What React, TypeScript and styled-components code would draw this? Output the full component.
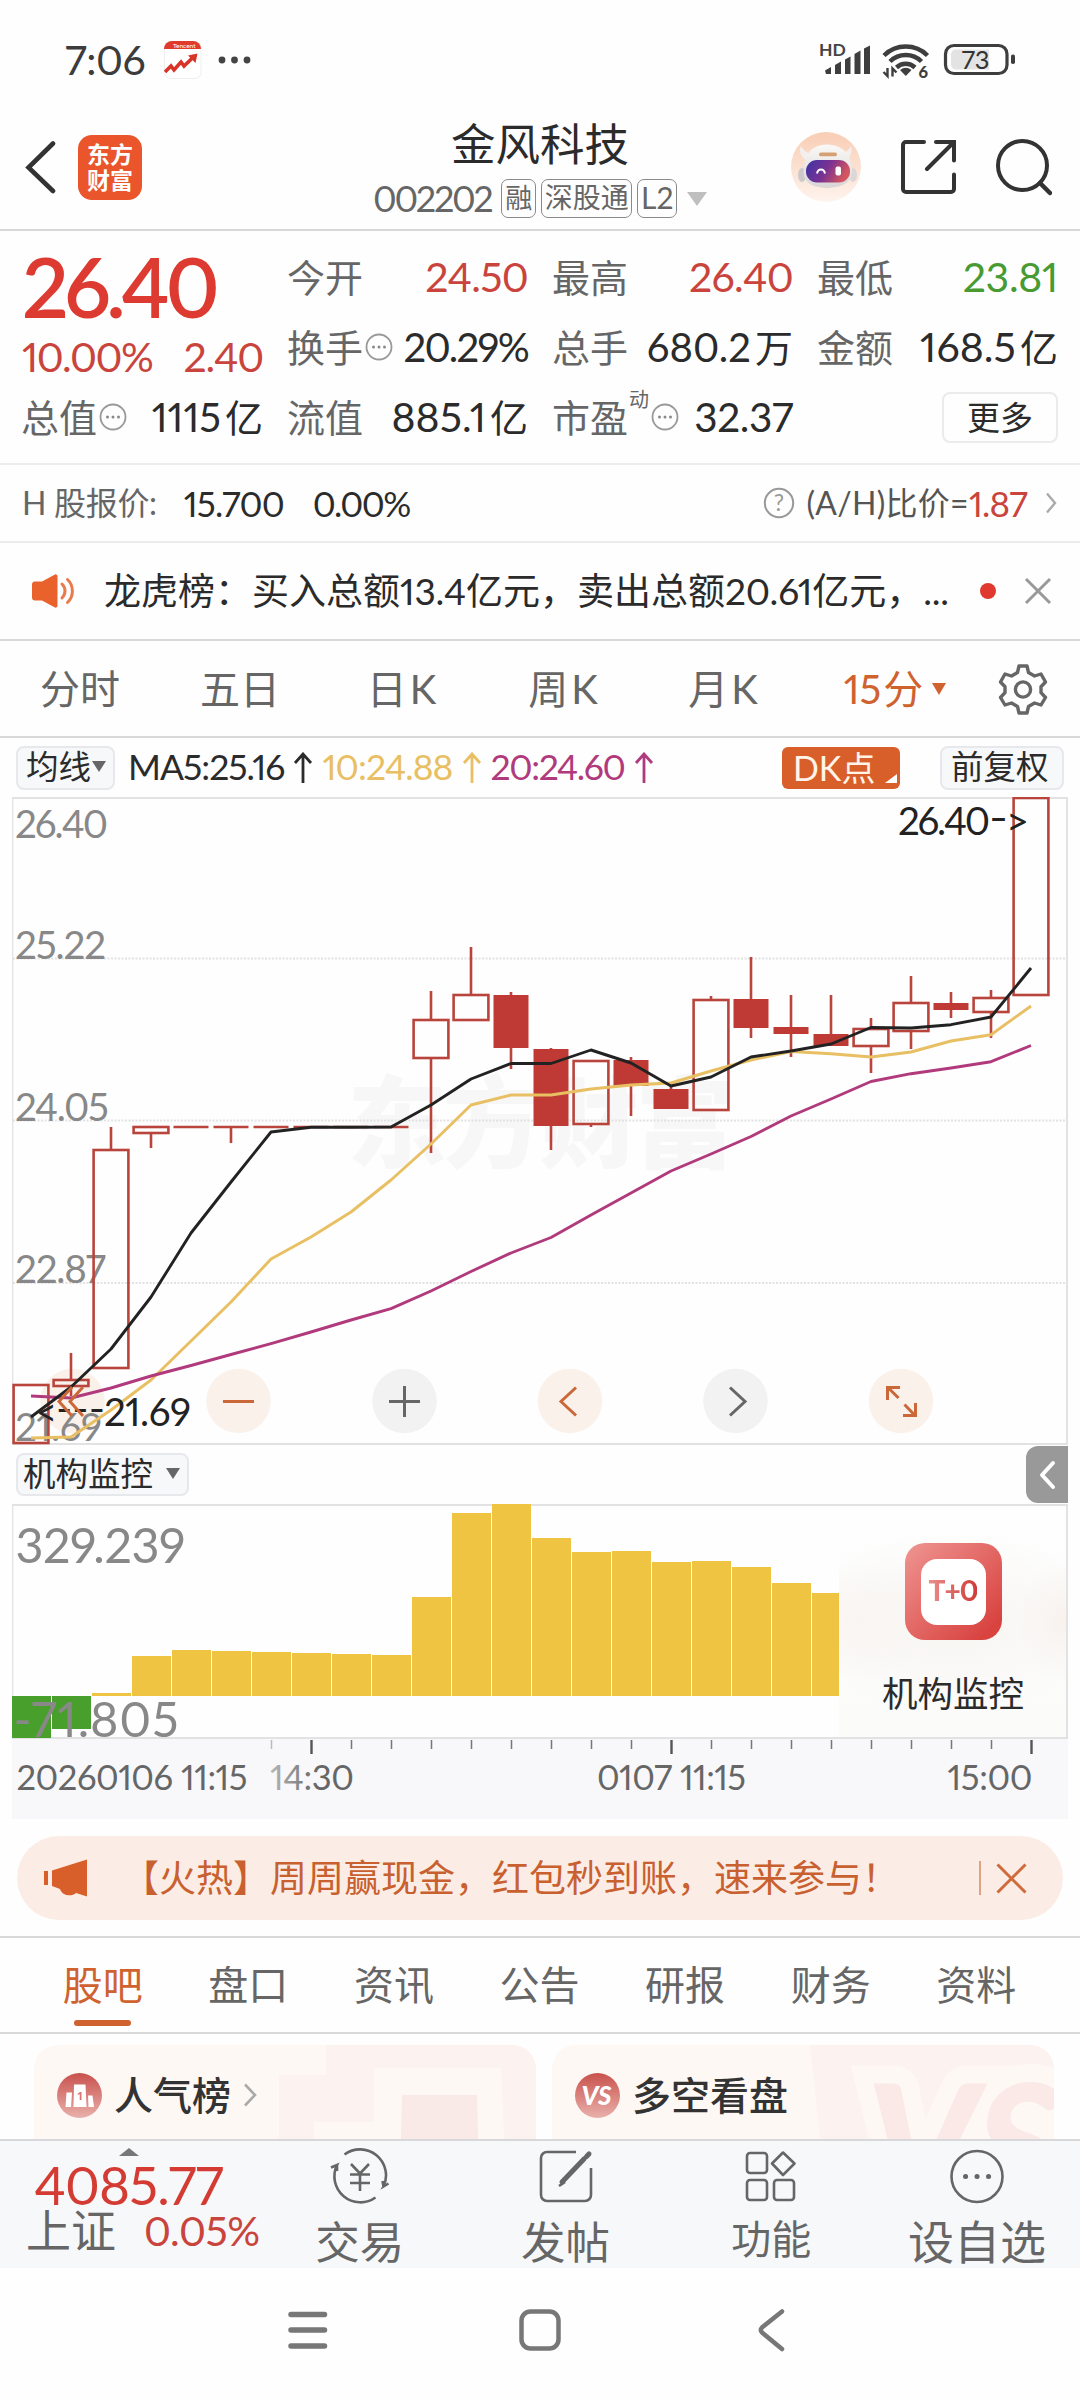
import React from 'react';
import styled, { createGlobalStyle } from 'styled-components';

const FONT = 'Lato, "Noto Sans CJK SC", sans-serif';
const RED = '#c9443c';
const ORANGE = '#cf622f';
const INK = '#2b2b2b';
const GREY = '#666';

const Global = createGlobalStyle`
  * { box-sizing: border-box; }
  body {
    margin: 0;
    background: #fefefe;
    font-family: ${FONT};
    font-variant-numeric: proportional-nums;
    color: ${INK};
  }
  svg { display: block; flex: none; }
`;

const Page = styled.div`
  width: 1080px;
  height: 2400px;
  overflow: hidden;
  display: flex;
  flex-direction: column;
  background: #fefefe;
`;

const Txt = styled.span<{ $s: number; $c?: string; $ls?: number; $w?: number }>`
  font-size: ${(p) => p.$s}px;
  line-height: 1.2;
  color: ${(p) => p.$c ?? INK};
  letter-spacing: ${(p) => p.$ls ?? 0}px;
  font-weight: ${(p) => p.$w ?? 400};
  white-space: nowrap;
  flex: none;
`;
const Unit = styled.span`
  font-size: 38px;
  letter-spacing: 0;
  margin-left: 4px;
`;

/* ---------- status bar ---------- */
const StatusBar = styled.div`
  height: 120px;
  padding: 0 64px 0 65px;
  display: flex;
  align-items: center;
  flex: none;
`;
const StatusIcons = styled.div`
  margin-left: auto;
  display: flex;
`;
const AppBadge = styled.div`
  margin: 0 16px 0 19px;
`;

/* ---------- title bar ---------- */
const TitleBar = styled.header`
  height: 111px;
  flex: none;
  display: flex;
  align-items: center;
  justify-content: space-between;
  border-bottom: 2px solid #d8d8d8;
  padding: 0 24px;
`;
const Side = styled.div<{ $right?: boolean }>`
  width: 268px;
  display: flex;
  align-items: center;
  justify-content: ${(p) => (p.$right ? 'flex-end' : 'flex-start')};
  gap: ${(p) => (p.$right ? 40 : 22)}px;
  padding-bottom: 15px;
  padding-right: ${(p) => (p.$right ? 4 : 0)}px;
`;
const Logo = styled.div`
  width: 64px;
  height: 65px;
  border-radius: 14px;
  background: #ea552b;
  color: #fff;
  font-size: 23px;
  line-height: 26px;
  font-weight: 700;
  text-align: center;
  padding-top: 6px;
`;
const TitleCenter = styled.div`
  display: flex;
  flex-direction: column;
  align-items: center;
  gap: 8px;
  padding-bottom: 13px;
`;
const CodeLine = styled.div`
  display: flex;
  align-items: center;
  height: 40px;
  gap: 5px;
`;
const Tag = styled.span<{ $s: number; $w: number }>`
  width: ${(p) => p.$w}px;
  height: 39px;
  border: 1.5px solid #8a8a8a;
  border-radius: 7px;
  font-size: ${(p) => p.$s}px;
  line-height: 35px;
  color: ${GREY};
  text-align: center;
  white-space: nowrap;
`;

/* ---------- quote ---------- */
const Quote = styled.section`
  height: 234px;
  flex: none;
  border-bottom: 2px solid #ececec;
  padding: 11px 22px 0 22px;
  display: grid;
  grid-template-columns: 241px 240px 240px 240px;
  column-gap: 25px;
`;
const Col = styled.div`
  display: flex;
  flex-direction: column;
`;
const Cell = styled.div<{ $h?: number }>`
  height: ${(p) => p.$h ?? 70}px;
  display: flex;
  align-items: center;
  justify-content: space-between;
`;
const Label = styled.span`
  display: flex;
  align-items: center;
  margin-left: -1px;
  font-size: 38px;
  line-height: 46px;
  color: ${GREY};
  white-space: nowrap;
  svg { margin-left: 2px; }
`;
const Sup = styled.span`
  font-size: 20px;
  line-height: 20px;
  align-self: flex-start;
  margin: -5px 0 0 1px;
`;
const MoreBtn = styled.div`
  margin-left: auto;
  width: 116px;
  height: 51px;
  border: 2px solid #e9ebed;
  border-radius: 8px;
  font-size: 33px;
  line-height: 46px;
  text-align: center;
`;

/* ---------- rows ---------- */
const Row = styled.div<{ $h: number; $line?: string; $pad?: string }>`
  height: ${(p) => p.$h}px;
  flex: none;
  display: flex;
  align-items: center;
  padding: ${(p) => p.$pad ?? '0 23px'};
  border-bottom: ${(p) => (p.$line ? `2px solid ${p.$line}` : 'none')};
`;
const Gap = styled.span<{ $w: number }>`
  width: ${(p) => p.$w}px;
  flex: none;
`;
const Grow = styled.span`
  flex: 1;
`;
const Dot = styled.span`
  width: 16px;
  height: 16px;
  border-radius: 50%;
  background: #e0392f;
`;
const News = styled.div`
  font-size: 37px;
  line-height: 44px;
  width: 850px;
  white-space: nowrap;
  b { font-weight: 400; letter-spacing: -0.2px; }
`;
const Period = styled.div<{ $w: number; $on?: boolean }>`
  width: ${(p) => p.$w}px;
  display: flex;
  align-items: center;
  justify-content: center;
  font-size: 40px;
  line-height: 48px;
  color: ${(p) => (p.$on ? ORANGE : GREY)};
`;
const Tri = styled.i<{ $w: number; $h: number; $c: string; $up?: boolean }>`
  width: 0;
  height: 0;
  flex: none;
  border-left: ${(p) => p.$w / 2}px solid transparent;
  border-right: ${(p) => p.$w / 2}px solid transparent;
  border-top: ${(p) => (p.$up ? 0 : p.$h)}px solid ${(p) => p.$c};
  border-bottom: ${(p) => (p.$up ? p.$h : 0)}px solid ${(p) => p.$c};
`;
const Chip = styled.div<{ $w: number; $h: number }>`
  width: ${(p) => p.$w}px;
  height: ${(p) => p.$h}px;
  border: 2px solid #e6e8eb;
  border-radius: 8px;
  background: #f7f8fa;
  display: flex;
  align-items: center;
  justify-content: space-between;
  padding: 0 7px 2px 5px;
  font-size: 32.5px;
  line-height: 40px;
  white-space: nowrap;
`;
const DKChip = styled.div`
  width: 118px;
  height: 42px;
  border-radius: 6px;
  background: #d95f2a;
  color: #fff3ea;
  font-size: 34px;
  line-height: 40px;
  padding-left: 11px;
  display: flex;
  align-items: center;
  gap: 10px;
  white-space: nowrap;
`;
const Corner = styled.i`
  align-self: flex-end;
  margin-bottom: 6px;
  border-left: 12px solid transparent;
  border-bottom: 9px solid #fff;
`;
const Collapse = styled.div`
  width: 42px;
  height: 57px;
  border-radius: 12px 0 0 12px;
  background: #999;
  display: flex;
  align-items: center;
  justify-content: center;
`;
const ChartBox = styled.div`
  flex: none;
  padding-left: 12px;
`;

/* ---------- sub chart overlay ---------- */
const SubWrap = styled.div`
  position: relative;
  flex: none;
  height: 315px;
  padding-left: 12px;
`;
const MonitorCard = styled.div`
  position: absolute;
  left: 839px;
  top: 2px;
  width: 227px;
  height: 231px;
  display: flex;
  flex-direction: column;
  align-items: center;
  gap: 33px;
  padding: 37px 0 0 1px;
  background:
    radial-gradient(ellipse 80px 60px at 20px 115px, #f9f5f2 0%, rgba(249, 245, 242, 0) 100%),
    radial-gradient(ellipse 50px 60px at 226px 115px, #f8f2ee 0%, rgba(248, 242, 238, 0) 100%),
    radial-gradient(ellipse 160px 90px at 113px 115px, #f7f5f1 0%, rgba(247, 245, 241, 0) 100%),
    linear-gradient(#fefefe, #fbfbfa);
`;
const TZero = styled.div`
  width: 97px;
  height: 97px;
  border-radius: 20px;
  background: linear-gradient(135deg, #ef9592 0%, #d8423f 90%);
  display: flex;
  align-items: center;
  justify-content: center;
`;
const TZeroInner = styled.div`
  width: 65px;
  height: 66px;
  border-radius: 16px;
  background: #fff;
  text-align: center;
  font-size: 28px;
  font-weight: 900;
  line-height: 62px;
  letter-spacing: -1px;
  span {
    background: linear-gradient(90deg, #e98f8b, #cf3b38);
    -webkit-background-clip: text;
    background-clip: text;
    color: transparent;
  }
`;

/* ---------- promo banner ---------- */
const Banner = styled.div`
  height: 84px;
  flex: none;
  margin: 17px 17px 16px 17px;
  border-radius: 42px;
  background: #fbede5;
  display: flex;
  align-items: center;
  padding: 0 36px 0 27px;
`;
const VLine = styled.span`
  width: 2px;
  height: 34px;
  background: #dca384;
  margin-right: 15px;
`;

/* ---------- info tabs ---------- */
const Tabs = styled.nav`
  height: 98px;
  flex: none;
  border-top: 2px solid #d8d8d8;
  border-bottom: 2px solid #d8d8d8;
  display: flex;
  padding: 0 31px 0 30px;
`;
const Tab = styled.div<{ $on?: boolean }>`
  flex: 1;
  display: flex;
  flex-direction: column;
  align-items: center;
  padding-top: 23px;
  font-size: 40px;
  line-height: 48px;
  color: ${(p) => (p.$on ? ORANGE : GREY)};
  &::after {
    content: '';
    width: 57px;
    height: 6px;
    margin-top: 11px;
    border-radius: 3px;
    background: ${(p) => (p.$on ? ORANGE : 'transparent')};
  }
`;
const Cards = styled.div`
  height: 105px;
  flex: none;
  display: flex;
  gap: 16px;
  padding: 11px 26px 0 34px;
  overflow: hidden;
`;
const Card = styled.div`
  position: relative;
  width: 502px;
  height: 130px;
  flex: none;
  border-radius: 24px;
  overflow: hidden;
  background: #fef8f5;
  display: flex;
  align-items: flex-start;
  padding: 27px 0 0 23px;
  font-size: 39px;
  line-height: 46px;
  font-weight: 500;
  color: #333;
`;
const Decor = styled.svg`
  position: absolute;
  right: 0;
  top: 0;
`;
const CardRow = styled.div`
  position: relative;
  display: flex;
  align-items: center;
  height: 46px;
`;

/* ---------- bottom bar ---------- */
const Bottom = styled.footer`
  height: 129px;
  flex: none;
  border-top: 2px solid #d8d8da;
  background: #f7f8fa;
  display: flex;
`;
const IndexBox = styled.div`
  width: 257px;
  display: flex;
  flex-direction: column;
  align-items: center;
  padding-top: 7px;
`;
const IndexValue = styled.div`
  font-size: 53px;
  line-height: 58px;
  letter-spacing: -0.9px;
  color: #d43c33;
`;
const IndexLine = styled.div`
  width: 257px;
  height: 34px;
  display: flex;
  align-items: center;
  padding-left: 26px;
  gap: 28px;
`;
const Action = styled.div<{ $s: number; $lh: number }>`
  width: 205.7px;
  display: flex;
  flex-direction: column;
  align-items: center;
  padding-top: 7px;
  font-size: ${(p) => p.$s}px;
  line-height: ${(p) => p.$lh}px;
  color: ${GREY};
  svg { margin-bottom: 11px; }
`;
const NavBar = styled.div`
  flex: 1;
  display: flex;
  padding: 40px 0 0 287px;
`;

/* ---------- chart data ---------- */
const STEP = 40;
const cx = (i: number) => 31 + i * STEP;

type Candle = { kind: 'up' | 'down' | 'flat'; t: number; b: number; hi?: number; lo?: number };
const flat = (lo?: number): Candle => ({ kind: 'flat', t: 1127, b: 1127, lo });
const candles: Candle[] = [
  { kind: 'up', t: 1385, b: 1443 },
  { kind: 'up', t: 1380, b: 1386, hi: 1353, lo: 1396 },
  { kind: 'up', t: 1150, b: 1368, hi: 1127 },
  { kind: 'up', t: 1127, b: 1133, lo: 1148 },
  flat(), flat(1143), flat(), flat(), flat(), flat(),
  { kind: 'up', t: 1020, b: 1058, hi: 991, lo: 1153 },
  { kind: 'up', t: 995, b: 1020, hi: 947 },
  { kind: 'down', t: 995, b: 1048, hi: 992, lo: 1069 },
  { kind: 'down', t: 1049, b: 1126, hi: 1048, lo: 1150 },
  { kind: 'up', t: 1061, b: 1124, lo: 1127 },
  { kind: 'down', t: 1060, b: 1086, hi: 1057, lo: 1116 },
  { kind: 'down', t: 1089, b: 1109, hi: 1087 },
  { kind: 'up', t: 1000, b: 1110, hi: 996 },
  { kind: 'down', t: 999, b: 1028, hi: 957, lo: 1038 },
  { kind: 'down', t: 1027, b: 1034, hi: 995, lo: 1057 },
  { kind: 'down', t: 1034, b: 1046, hi: 995 },
  { kind: 'up', t: 1029, b: 1046, hi: 1018, lo: 1073 },
  { kind: 'up', t: 1003, b: 1031, hi: 976, lo: 1049 },
  { kind: 'down', t: 1003, b: 1010, hi: 992, lo: 1018 },
  { kind: 'up', t: 998, b: 1012, hi: 990, lo: 1038 },
  { kind: 'up', t: 798, b: 995 },
];
const ma5 = [1417, 1387, 1349, 1297, 1233, 1182, 1132, 1127.3, 1127.3, 1127, 1105, 1079, 1063.5, 1063.5, 1050, 1063, 1086, 1077, 1057, 1051, 1044, 1027.5, 1028, 1024.7, 1017, 968];
const ma10 = [1438, 1437, 1410, 1380, 1341, 1302, 1259, 1237, 1212, 1180, 1144, 1105, 1095, 1095, 1089, 1085, 1083, 1071, 1060, 1051.5, 1053.7, 1057, 1052, 1041, 1034.7, 1006];
const ma20 = [1396, 1398, 1388, 1376, 1365.5, 1354.5, 1343.7, 1332, 1320, 1308.7, 1291, 1271.5, 1253, 1237.5, 1215, 1193, 1171, 1154, 1136.5, 1116, 1099, 1081.5, 1073.7, 1068, 1061.7, 1045.5];
const line = (v: number[]) => v.map((y, i) => `${cx(i)},${y}`).join(' ');

const bars = [1738, 1729, 1693, 1656, 1650, 1651, 1652, 1653, 1654, 1655, 1597, 1513, 1504, 1538, 1552, 1551, 1562, 1561, 1567, 1583, 1593];
const ZERO = 1696;

const axisLabels: [string, number, number][] = [
  ['26.40', 837.5, 93],
  ['25.22', 959, 91],
  ['24.05', 1121, 94],
  ['22.87', 1283, 91],
  ['21.69', 1441, 87],
];

const CandleShape = ({ c, x }: { c: Candle; x: number }) => (
  <g stroke="#b8443c" strokeWidth={2.6} fill="none">
    {c.hi !== undefined && <path d={`M${x} ${c.hi}V${c.t}`} />}
    {c.lo !== undefined && <path d={`M${x} ${c.b}V${c.lo}`} />}
    {c.kind === 'up' && <rect x={x - 17.4} y={c.t} width={34.8} height={c.b - c.t} />}
    {c.kind === 'down' && <rect x={x - 17.5} y={c.t} width={35} height={c.b - c.t} fill="#bf3a35" stroke="none" />}
    {c.kind === 'flat' && <path d={`M${x - 17.5} ${c.t}h35`} />}
  </g>
);

const MainChart = () => (
  <svg width="1056" height="648" viewBox="12 797 1056 648" fontFamily={FONT}>
    <text x="347" y="1160" fontSize="100" fontWeight="900" fill="#f7f7f7" textLength="388">东方财富</text>
    {[958.5, 1120.5, 1283].map((y) => (
      <path key={y} d={`M13 ${y}H1067`} stroke="#e2e2e2" strokeWidth="2" strokeDasharray="2 1.5" />
    ))}
    <path d="M12 798H1067V1444H12" fill="none" stroke="#e2e2e2" strokeWidth="2" />
    <path d="M12.7 798V1444" stroke="#e2e2e2" strokeWidth="1.2" />
    {[[72.5, 1], [238.5, 1], [404.5, 0], [570, 1], [735.5, 0], [901, 1]].map(([x, o]) => (
      <circle key={x} cx={x} cy="1401" r="32.3" fill={o ? '#fbf1eb' : '#f2f2f2'} />
    ))}
    {axisLabels.map(([t, y, w]) => (
      <text key={t} x="15" y={y} fontSize="38.5" fill="#888" textLength={w}>{t}</text>
    ))}
    {candles.map((c, i) => <CandleShape key={i} c={c} x={cx(i)} />)}
    <g fill="none" strokeWidth="2.9" strokeLinejoin="round">
      <polyline points={line(ma10)} stroke="#e8bf62" />
      <polyline points={line(ma20)} stroke="#b03a7c" />
      <polyline points={line(ma5)} stroke="#222" />
    </g>
    <g fontSize="38.5" fill="#222">
      <text x="898" y="835" textLength="92">26.40</text>
      <text x="989" y="831" textLength="19" lengthAdjust="spacingAndGlyphs">-</text>
      <text x="1006" y="835" textLength="23" lengthAdjust="spacingAndGlyphs">&gt;</text>
      <text x="36" y="1426" textLength="21" lengthAdjust="spacingAndGlyphs">&lt;</text>
      <text x="56" y="1422" textLength="49" lengthAdjust="spacingAndGlyphs">---</text>
      <text x="104" y="1426" textLength="87">21.69</text>
    </g>
    <g fill="none" stroke="#ca6839" strokeWidth="3">
      <path d="M72 1387L59 1401.5L72 1416M83 1387L70 1401.5L83 1416" />
      <path d="M223 1401.5H254" />
      <path d="M576 1387.5L561 1401.5L576 1415.5" />
      <path d="M898.5 1398L888 1387.5M887.5 1400V1387.5H900M904.5 1404.500L915 1415.500M903 1415.500H915.500V1403" />
    </g>
    <g fill="none" stroke="#666" strokeWidth="3">
      <path d="M389 1401.500H420M404.500 1386V1417" />
      <path d="M730 1387.500L745 1401.500L730 1415.500" />
    </g>
  </svg>
);

const SubChart = () => (
  <svg width="1056" height="315" viewBox="12 1504 1056 315" fontFamily={FONT}>
    <defs>
      <linearGradient id="fade" gradientUnits="userSpaceOnUse" x1="268" y1="0" x2="318" y2="0">
        <stop offset="0" stopColor="#bbb" />
        <stop offset="1" stopColor="#666" />
      </linearGradient>
    </defs>
    <rect x="12" y="1739" width="1056" height="80" fill="#f8f8fb" />
    <path d="M12 1505H1067V1738H12" fill="none" stroke="#e2e2e2" strokeWidth="2" />
    <path d="M12.700 1505V1738" stroke="#e2e2e2" strokeWidth="1.2" />
    {bars.map((y, i) => (
      <rect
        key={i}
        x={12 + i * STEP}
        y={Math.min(y, ZERO)}
        width={i === 20 ? 27 : 39}
        height={Math.abs(ZERO - y)}
        fill={y > ZERO ? '#489f2b' : '#efc443'}
      />
    ))}
    <text x="15.500" y="1562.500" fontSize="48.500" fill="#888" textLength="170">329.239</text>
    <text x="13.500" y="1736.500" fontSize="48.500" fill="#888" textLength="165">-71.805</text>
    {Array.from({ length: 20 }, (_, k) => k + 6).map((i) => {
      const major = i % 9 === 7;
      return (
        <path
          key={i}
          d={`M${cx(i) + 0.5} 1740v${major ? 14 : 9}`}
          stroke={i === 6 ? '#bbb' : major ? '#555' : '#777'}
          strokeWidth={major ? 2.4 : 1.5}
        />
      );
    })}
    <g fontSize="34.500" fill="#666">
      <text x="16.500" y="1790" textLength="231">20260106 11:15</text>
      <text x="270" y="1790" textLength="84" fill="url(#fade)">14:30</text>
      <text x="597" y="1790" textLength="149">0107 11:15</text>
      <text x="947.500" y="1790" textLength="85">15:00</text>
    </g>
  </svg>
);

/* ---------- icons ---------- */
const MoreDot = () => (
  <svg width="28" height="28" viewBox="0 0 28 28">
    <circle cx="14" cy="14" r="12.500" fill="none" stroke="#999" strokeWidth="1.800" />
    {[8.5, 14, 19.5].map((x) => <circle key={x} cx={x} cy="14" r="1.500" fill="#888" />)}
  </svg>
);
const UpArrow = ({ c }: { c: string }) => (
  <svg width="20" height="32" viewBox="0 0 20 32">
    <path d="M10 31V2M2 11L10 2L18 11" fill="none" stroke={c} strokeWidth="2.800" />
  </svg>
);
const Signal = () => (
  <svg width="198" height="44" viewBox="818 38 198 44" fontFamily={FONT}>
    <text x="819" y="55.500" fontSize="17.500" fontWeight="700" fill="#444">HD</text>
    <g fill="#3e3e3e">
      <path d="M825 70.500l6-3.500v7h-5z" />
      <path d="M835 65l6-3.500V74h-6z" />
      <path d="M845 59.500l5.500-3V74h-5.500z" />
      <path d="M854.500 54l6-3.500V74h-6z" />
      <path d="M864 48.500l6-3V74h-6z" />
      <path d="M900 70a9.500 9.500 0 0 1 11.500 0l-5.700 6z" />
    </g>
    <g fill="none" stroke="#3e3e3e" strokeWidth="4.500">
      <path d="M884 55.500a31 31 0 0 1 43.500 0" />
      <path d="M890 61.500a22.500 22.500 0 0 1 31.500 0" />
      <path d="M896.500 67.500a13.500 13.500 0 0 1 18.500 0" />
    </g>
    <path d="M887.500 68v8l-4-4M892.500 76.500v-8l4 4" fill="none" stroke="#3e3e3e" strokeWidth="2.400" />
    <text x="918.500" y="78" fontSize="16.500" fontWeight="900" fill="#3e3e3e">6</text>
    <rect x="945.500" y="45.500" width="61.500" height="28" rx="8.500" fill="none" stroke="#3e3e3e" strokeWidth="3.200" />
    <path d="M956 49.500h33v20h-33a5 5 0 0 1-5-5v-10a5 5 0 0 1 5-5z" fill="#e3e3e3" />
    <rect x="1011" y="54.500" width="4" height="9.500" rx="1.800" fill="#3e3e3e" />
    <text x="961.500" y="69" fontSize="25.500" fill="#333" textLength="28">73</text>
  </svg>
);
const Robot = () => (
  <svg width="70" height="70" viewBox="0 0 70 70">
    <defs>
      <linearGradient id="rbg" x1="0" y1="0" x2="0" y2="1">
        <stop offset="0" stopColor="#f9cdb4" />
        <stop offset="1" stopColor="#fef4ee" />
      </linearGradient>
      <linearGradient id="rv" x1="0" y1="0" x2="1" y2="0.300">
        <stop offset="0" stopColor="#3c33a8" />
        <stop offset="0.550" stopColor="#7b3291" />
        <stop offset="1" stopColor="#d3555f" />
      </linearGradient>
      <linearGradient id="rh" x1="0" y1="0" x2="0" y2="1">
        <stop offset="0" stopColor="#fbf9f8" />
        <stop offset="1" stopColor="#d9d5d6" />
      </linearGradient>
    </defs>
    <circle cx="35" cy="35" r="35" fill="url(#rbg)" />
    <path d="M15 28C9 24 8 19 10 14c3 5 6 7 11 8zM55 28c6-4 6-9 5-14-3 5-6 7-11 8z" fill="#f3efee" />
    <ellipse cx="11" cy="43" rx="4" ry="7" fill="#cdc9cb" />
    <ellipse cx="62" cy="43" rx="4" ry="7" fill="#dcd6d6" />
    <path d="M13 36C14 20 22 13 36 12.500C50 13 59 20 61 36C62 48 56 55 36 56C17 55 11 48 13 36z" fill="url(#rh)" />
    <rect x="28" y="20.500" width="18" height="3.800" rx="1.900" fill="#d6a172" />
    <rect x="15" y="28" width="44" height="22.500" rx="11" fill="url(#rv)" />
    <path d="M26 41.500c1-5.500 7-5.500 8 0" fill="none" stroke="#fff" strokeWidth="2" />
    <rect x="44.500" y="34.500" width="5.500" height="9" rx="2" fill="#fff" />
  </svg>
);

const actions: [string, number, number, React.ReactNode][] = [
  ['交易', 44.5, 52, (
    <>
      <path d="M15.500 6.500A26 26 0 0 1 54.500 38.500L59.500 35.500M54.500 38.500L53.500 33" />
      <path d="M46.500 49.500A26 26 0 0 1 8 17L2 19.500M8 17.500V23" />
      <path d="M22 16L31 25.500L40 16M31 25.500V43M21 26.500H41M21 35H41" />
    </>
  )],
  ['发帖', 44.5, 52, (
    <>
      <path d="M41 4H12a6 6 0 0 0-6 6V47a6 6 0 0 0 6 6H50a6 6 0 0 0 6-6V20" />
      <path d="M27 34L49 11" strokeWidth="5" strokeLinecap="round" />
      <path d="M51.500 8.500L54 6" strokeWidth="5" strokeLinecap="round" />
      <path d="M24 38L30 34" />
    </>
  )],
  ['功能', 40, 46, (
    <>
      <rect x="7" y="5" width="20" height="20" rx="3" />
      <rect x="7" y="32" width="20" height="20" rx="3" />
      <rect x="34" y="32" width="20" height="20" rx="3" />
      <path d="M43 4.500L54.500 15.500L43 27L32 15.500z" strokeLinejoin="round" />
    </>
  )],
  ['设自选', 46, 52, (
    <>
      <circle cx="31" cy="28.500" r="25.500" />
      <path d="M19.500 28.500h.1M31 28.500h.1M42.500 28.500h.1" strokeWidth="5" strokeLinecap="round" />
    </>
  )],
];

export default function App() {
  return (
    <Page>
      <Global />
      <StatusBar>
        <Txt $s={41} $c="#3c3c3c" $ls={-0.5}>7:06</Txt>
        <AppBadge>
          <svg width="38" height="38" viewBox="0 0 38 38" fontFamily={FONT}>
            <rect x="0.500" y="0.500" width="36.500" height="37" rx="6" fill="#fff" stroke="#eee" />
            <path d="M0 8a8 8 0 0 1 8-8h21a8 8 0 0 1 8 8z" fill="#e03a2c" />
            <text x="9" y="6.800" fontSize="6.500" fill="#fff">Tencent</text>
            <path d="M1 31L7 25L10 29L17 21L20 25L30 15.500" fill="none" stroke="#d93428" strokeWidth="3.600" />
            <path d="M24 14.500L33.500 12.500L31.500 22z" fill="#d93428" />
          </svg>
        </AppBadge>
        <svg width="34" height="10" viewBox="0 0 34 10">
          {[4, 16.5, 29].map((x) => <circle key={x} cx={x} cy="5" r="3.400" fill="#444" />)}
        </svg>
        <StatusIcons><Signal /></StatusIcons>
      </StatusBar>

      <TitleBar>
        <Side>
          <svg width="32" height="54" viewBox="0 0 32 54">
            <path d="M29 3.500L4.500 27.500L29 51" fill="none" stroke="#333" strokeWidth="4.600" strokeLinecap="round" />
          </svg>
          <Logo>东方<br />财富</Logo>
        </Side>
        <TitleCenter>
          <Txt $s={44.5}>金风科技</Txt>
          <CodeLine>
            <Txt $s={36} $c={GREY} $ls={-2.3}>002202</Txt>
            <Gap $w={-4} />
            <Tag $s={27} $w={34.5}>融</Tag>
            <Tag $s={28} $w={91.5}>深股通</Tag>
            <Tag $s={30} $w={39.5}>L2</Tag>
            <Gap $w={0} />
            <Tri $w={21} $h={14} $c="#bfbfbf" />
          </CodeLine>
        </TitleCenter>
        <Side $right>
          <Robot />
          <svg width="55" height="58" viewBox="16 0 55 58">
            <path d="M39 4H21a3 3 0 0 0-3 3V51a3 3 0 0 0 3 3H66a3 3 0 0 0 3-3V36.500M51 4H69V22.500M69 4L42 31" fill="none" stroke="#333" strokeWidth="4" strokeLinecap="round" />
          </svg>
          <svg width="56" height="58" viewBox="0 0 56 58">
            <circle cx="26.500" cy="27.500" r="24.500" fill="none" stroke="#333" strokeWidth="4" />
            <path d="M44 45L54 55" stroke="#333" strokeWidth="4.500" strokeLinecap="round" />
          </svg>
        </Side>
      </TitleBar>

      <Quote>
        <Col>
          <Cell $h={89}><Txt $s={82} $w={600} $c="#dd3a31" $ls={-4.6}>26.40</Txt></Cell>
          <Cell $h={51}>
            <Txt $s={41} $c={RED} $ls={-1.4}>10.00%</Txt>
            <Txt $s={41} $c={RED} $ls={-1.2}>2.40</Txt>
          </Cell>
          <Cell><Label>总值<MoreDot /></Label><Txt $s={40}>1115<Unit>亿</Unit></Txt></Cell>
        </Col>
        <Col>
          <Cell><Label>今开</Label><Txt $s={41} $c={RED} $ls={-0.7}>24.50</Txt></Cell>
          <Cell><Label>换手<MoreDot /></Label><Txt $s={40} $ls={-1.7}>20.29%</Txt></Cell>
          <Cell><Label>流值</Label><Txt $s={41} $ls={0}>885.1<Unit>亿</Unit></Txt></Cell>
        </Col>
        <Col>
          <Cell><Label>最高</Label><Txt $s={41} $c={RED} $ls={-0.7}>26.40</Txt></Cell>
          <Cell><Label>总手</Label><Txt $s={40}>680.2<Unit>万</Unit></Txt></Cell>
          <Cell><Label>市盈<Sup>动</Sup><MoreDot /></Label><Txt $s={40.5} $ls={-0.4}>32.37</Txt></Cell>
        </Col>
        <Col>
          <Cell><Label>最低</Label><Txt $s={41} $c="#489a33" $ls={-0.3}>23.81</Txt></Cell>
          <Cell><Label>金额</Label><Txt $s={41} $ls={0.1}>168.5<Unit>亿</Unit></Txt></Cell>
          <Cell><MoreBtn>更多</MoreBtn></Cell>
        </Col>
      </Quote>

      <Row $h={78} $line="#ececec" $pad="0 23px 0 22px">
        <Txt $s={32} $c={GREY} $ls={-0.3}>H 股报价:</Txt>
        <Gap $w={27} />
        <Txt $s={35} $ls={-0.9}>15.700</Txt>
        <Gap $w={29} />
        <Txt $s={35} $ls={-1.6}>0.00%</Txt>
        <Grow />
        <svg width="32" height="32" viewBox="0 0 32 32" fontFamily={FONT}>
          <circle cx="16" cy="16" r="14.200" fill="none" stroke="#999" strokeWidth="2" />
          <text x="16" y="24" fontSize="23" fill="#999" textAnchor="middle">?</text>
        </svg>
        <Gap $w={11} />
        <Txt $s={32} $c="#555" $ls={0.3}>(A/H)比价=</Txt>
        <Txt $s={35} $c={RED} $ls={-0.8}>1.87</Txt>
        <Gap $w={18} />
        <svg width="12" height="22" viewBox="0 0 12 22">
          <path d="M2 1.500L10 11L2 20.500" fill="none" stroke="#aaa" strokeWidth="2.400" />
        </svg>
      </Row>

      <Row $h={98} $line="#d8d8d8" $pad="0 28px 0 31px">
        <svg width="44" height="36" viewBox="0 0 44 36">
          <path d="M1 11.500a3 3 0 0 1 3-3H11L24 1.500a1.800 1.800 0 0 1 2.500 1.700V32.800a1.800 1.800 0 0 1-2.500 1.700L11 27.500H4a3 3 0 0 1-3-3z" fill="#ea622b" />
          <path d="M31 11c4 4 4 10 0 14M36.500 6.500c6.500 6 6.500 17 0 23" fill="none" stroke="#ea7a4c" strokeWidth="3" strokeLinecap="round" />
        </svg>
        <Gap $w={29} />
        <News>龙虎榜：买入总额<b>13.4</b>亿元，卖出总额<b>20.61</b>亿元，<b>...</b></News>
        <Grow />
        <Dot />
        <Gap $w={28} />
        <svg width="28" height="28" viewBox="0 0 28 28">
          <path d="M2 2L26 26M26 2L2 26" stroke="#999" strokeWidth="3" />
        </svg>
      </Row>

      <Row $h={97} $line="#d8d8d8" $pad="0">
        <Period $w={160}>分时</Period>
        <Period $w={160}>五日</Period>
        <Period $w={163}>日<Gap $w={3} />K</Period>
        <Period $w={160}>周<Gap $w={3} />K</Period>
        <Period $w={160}>月<Gap $w={3} />K</Period>
        <Period $w={184} $on>15<Gap $w={2} />分<Gap $w={9} /><Tri $w={15} $h={12} $c={ORANGE} /></Period>
        <Gap $w={9} />
        <svg width="54" height="52" viewBox="0 0 54 52">
          <path d="M23 3h8l1.500 6.500 6 3.500 6.500-2 4.500 8-4.500 4.700v6l4.500 4.800-4.500 7.500-6.500-2-6 3.500L31 50h-8l-1.500-6.500-6-3.500-6.500 2-4.500-7.500L9 29.700v-6L4.500 19 9 11l6.500 2 6-3.500z" fill="none" stroke="#666" strokeWidth="3.400" strokeLinejoin="round" />
          <circle cx="27" cy="26.500" r="7.600" fill="none" stroke="#666" strokeWidth="3.400" />
        </svg>
      </Row>

      <Row $h={59} $pad="0 16px">
        <Chip $w={99} $h={44}><Gap $w={2} />均线<Tri $w={14} $h={11} $c="#666" /></Chip>
        <Gap $w={13} />
        <Txt $s={35.5} $ls={-1}>MA5:25.16</Txt>
        <Gap $w={9} />
        <UpArrow c="#2b2b2b" />
        <Gap $w={9} />
        <Txt $s={35.5} $c="#e8bf62" $ls={-0.9}>10:24.88</Txt>
        <Gap $w={9} />
        <UpArrow c="#e8bf62" />
        <Gap $w={9} />
        <Txt $s={35.5} $c="#b03a7c" $ls={-1.4}>20:24.60</Txt>
        <Gap $w={9} />
        <UpArrow c="#b03a7c" />
        <Grow />
        <DKChip>DK点<Corner /></DKChip>
        <Gap $w={40} />
        <Chip $w={124} $h={44}><Gap $w={4} />前复权<Grow /></Chip>
      </Row>

      <ChartBox><MainChart /></ChartBox>

      <Row $h={59} $pad="0 12px 0 16px">
        <Chip $w={173} $h={43}>机构监控<Tri $w={14} $h={11} $c="#666" /></Chip>
        <Grow />
        <Collapse>
          <svg width="18" height="30" viewBox="0 0 18 30">
            <path d="M15 3L4 15L15 27" fill="none" stroke="#fff" strokeWidth="4" strokeLinecap="round" strokeLinejoin="round" />
          </svg>
        </Collapse>
      </Row>

      <SubWrap>
        <SubChart />
        <MonitorCard>
          <TZero><TZeroInner><span>T+0</span></TZeroInner></TZero>
          <Txt $s={35.5}>机构监控</Txt>
        </MonitorCard>
      </SubWrap>

      <Banner>
        <svg width="44" height="38" viewBox="0 0 44 38">
          <path d="M0 12h4v14H0zM8 11.500L43 0.500V37.500L32 34C28 38 18 37 16 30L8 27z" fill="#d95f2a" />
        </svg>
        <Gap $w={34} />
        <Txt $s={37} $c="#c8602f">【火热】周周赢现金，红包秒到账，速来参与！</Txt>
        <Grow />
        <VLine />
        <svg width="31" height="31" viewBox="0 0 31 31">
          <path d="M1.500 1.500L29.500 29.500M29.500 1.500L1.500 29.500" stroke="#cf6a3b" strokeWidth="3" />
        </svg>
      </Banner>

      <Tabs>
        {['股吧', '盘口', '资讯', '公告', '研报', '财务', '资料'].map((t, i) => (
          <Tab key={t} $on={i === 0}>{t}</Tab>
        ))}
      </Tabs>

      <Cards>
        <Card>
          <Decor width="260" height="130" viewBox="0 0 260 130">
            <path d="M3 30H50V0H260V130H3z" fill="#fcf2ef" />
            <path d="M38 77H98V23H225L230 130H38z" fill="#fef8f5" />
            <path d="M126 50H201L203 130H124z" fill="#f9e9e7" />
          </Decor>
          <CardRow>
            <svg width="45" height="45" viewBox="0 0 45 45" fontFamily={FONT}>
              <defs>
                <linearGradient id="badge" x1="0" y1="0" x2="0" y2="1">
                  <stop offset="0" stopColor="#c9524d" />
                  <stop offset="1" stopColor="#e9b0ab" />
                </linearGradient>
              </defs>
              <circle cx="22.500" cy="22.500" r="22.500" fill="url(#badge)" />
              <path d="M9.500 19.500h5.500L14 34H8.500zM17 11.500H28.500L29.500 34H16.500zM31 22.500h4.500L37 34h-5.500z" fill="#fff" />
              <text x="23" y="27" fontSize="12" fontWeight="900" fill="#d4736e" textAnchor="middle">1</text>
            </svg>
            <Gap $w={12} />
            人气榜
            <Gap $w={12} />
            <svg width="14" height="24" viewBox="0 0 14 24">
              <path d="M2 1.500L12 12L2 22.500" fill="none" stroke="#aaa" strokeWidth="2.600" />
            </svg>
          </CardRow>
        </Card>
        <Card>
          <Decor width="250" height="130" viewBox="0 0 250 130" fontFamily={FONT}>
            <path d="M6 0H250V130H20z" fill="#fcf2ef" />
            <text x="62" y="162" fontSize="170" fontWeight="900" fontStyle="italic" fill="#fae9e7" stroke="#fef8f5" strokeWidth="36" paintOrder="stroke">VS</text>
          </Decor>
          <CardRow>
            <svg width="45" height="45" viewBox="0 0 45 45" fontFamily={FONT}>
              <circle cx="22.500" cy="22.500" r="22.500" fill="url(#badge)" />
              <text x="21.500" y="32" fontSize="26" fontWeight="900" fontStyle="italic" fill="#fff" textAnchor="middle" textLength="30" lengthAdjust="spacingAndGlyphs">VS</text>
            </svg>
            <Gap $w={12} />
            多空看盘
          </CardRow>
        </Card>
      </Cards>

      <Bottom>
        <IndexBox>
          <Tri $w={20} $h={8} $c="#777" $up />
          <IndexValue>4085.77</IndexValue>
          <IndexLine>
            <Txt $s={45} $c={GREY}>上证</Txt>
            <Txt $s={41} $c={RED} $ls={-0.5}>0.05%</Txt>
          </IndexLine>
        </IndexBox>
        {actions.map(([t, s, lh, icon]) => (
          <Action key={t} $s={s} $lh={lh}>
            <svg width="62" height="57" viewBox="0 0 62 57" fill="none" stroke="#666" strokeWidth="2.600">{icon}</svg>
            {t}
          </Action>
        ))}
      </Bottom>

      <NavBar>
        <svg width="500" height="44" viewBox="0 0 500 44" fill="none" stroke="#777" strokeLinecap="round">
          <path d="M4 6.500H37.500M4 22H37.500M4 38H37.500" strokeWidth="5.500" />
          <rect x="234.500" y="3.500" width="37" height="37" rx="9" strokeWidth="4.500" />
          <path d="M495 3.500L475 19.500Q472.500 22 475 24.500L495 41" strokeWidth="4.500" />
        </svg>
      </NavBar>
    </Page>
  );
}
